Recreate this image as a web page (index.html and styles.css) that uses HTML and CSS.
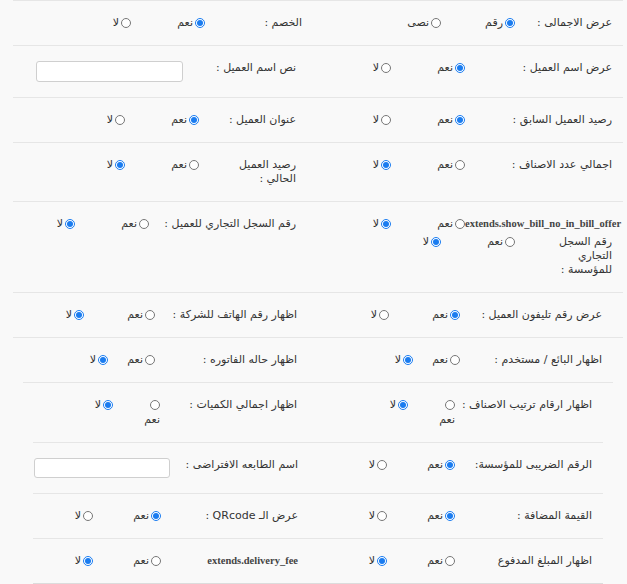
FILE: index.html
```html
<!DOCTYPE html>
<html lang="ar" dir="rtl">
<head>
    <meta charset="UTF-8">
    <meta name="viewport" content="width=device-width, initial-scale=1.0">
    <title>اعدادات الفاتورة</title>
    <link rel="stylesheet" href="styles.css">
</head>
<body>
    <div class="settings">
        <!-- row 1 -->
        <div class="row">
            <div class="half">
                <span class="lbl xs">عرض الاجمالى :</span>
                <label class="opt"><input type="radio" name="total_type" checked>رقم</label>
                <label class="opt"><input type="radio" name="total_type">نصى</label>
            </div>
            <div class="half">
                <span class="lbl xs">الخصم :</span>
                <label class="opt"><input type="radio" name="discount" checked>نعم</label>
                <label class="opt"><input type="radio" name="discount">لا</label>
            </div>
        </div>

        <!-- row 2 -->
        <div class="row">
            <div class="half">
                <span class="lbl xxl">عرض اسم العميل :</span>
                <label class="opt"><input type="radio" name="client_name" checked>نعم</label>
                <label class="opt"><input type="radio" name="client_name">لا</label>
            </div>
            <div class="half">
                <span class="lbl sm">نص اسم العميل :</span>
                <input type="text" class="field long">
            </div>
        </div>

        <!-- row 3 -->
        <div class="row">
            <div class="half">
                <span class="lbl xxl">رصيد العميل السابق :</span>
                <label class="opt"><input type="radio" name="prev_balance" checked>نعم</label>
                <label class="opt"><input type="radio" name="prev_balance">لا</label>
            </div>
            <div class="half">
                <span class="lbl xs">عنوان العميل :</span>
                <label class="opt"><input type="radio" name="client_address" checked>نعم</label>
                <label class="opt"><input type="radio" name="client_address">لا</label>
            </div>
        </div>

        <!-- row 4 -->
        <div class="row">
            <div class="half">
                <span class="lbl xxl">اجمالي عدد الاصناف :</span>
                <label class="opt"><input type="radio" name="items_count">نعم</label>
                <label class="opt"><input type="radio" name="items_count" checked>لا</label>
            </div>
            <div class="half">
                <span class="lbl xs"><span class="wrap">رصيد العميل الحالي :</span></span>
                <label class="opt"><input type="radio" name="cur_balance">نعم</label>
                <label class="opt"><input type="radio" name="cur_balance" checked>لا</label>
            </div>
        </div>

        <!-- row 5 -->
        <div class="row">
            <div class="half stack">
                <div class="line">
                    <span class="lbl xxl en">extends.show_bill_no_in_bill_offer</span>
                    <label class="opt"><input type="radio" name="bill_no_offer">نعم</label>
                    <label class="opt"><input type="radio" name="bill_no_offer" checked>لا</label>
                </div>
                <div class="line">
                    <span class="lbl xs"><span class="wrap tight">رقم السجل التجاري للمؤسسة :</span></span>
                    <label class="opt"><input type="radio" name="company_cr">نعم</label>
                    <label class="opt"><input type="radio" name="company_cr" checked>لا</label>
                </div>
            </div>
            <div class="half">
                <span class="lbl xxl">رقم السجل التجاري للعميل :</span>
                <label class="opt"><input type="radio" name="client_cr">نعم</label>
                <label class="opt"><input type="radio" name="client_cr" checked>لا</label>
            </div>
        </div>

        <!-- row 6 -->
        <div class="row wide-pad">
            <div class="half">
                <span class="lbl xl">عرض رقم تليفون العميل :</span>
                <label class="opt mid"><input type="radio" name="client_phone" checked>نعم</label>
                <label class="opt mid"><input type="radio" name="client_phone">لا</label>
            </div>
            <div class="half">
                <span class="lbl xl">اظهار رقم الهاتف للشركة :</span>
                <label class="opt mid"><input type="radio" name="company_phone">نعم</label>
                <label class="opt mid"><input type="radio" name="company_phone" checked>لا</label>
            </div>
        </div>

        <!-- row 7 -->
        <div class="row wide-pad">
            <div class="half">
                <span class="lbl xl">اظهار البائع / مستخدم :</span>
                <label class="opt short"><input type="radio" name="seller">نعم</label>
                <label class="opt short"><input type="radio" name="seller" checked>لا</label>
            </div>
            <div class="half">
                <span class="lbl xl">اظهار حاله الفاتوره :</span>
                <label class="opt short"><input type="radio" name="invoice_state">نعم</label>
                <label class="opt short"><input type="radio" name="invoice_state" checked>لا</label>
            </div>
        </div>

        <!-- row 8 -->
        <div class="row inset wide-pad">
            <div class="half">
                <span class="lbl lg">اظهار ارقام ترتيب الاصناف :</span>
                <label class="opt short col"><input type="radio" name="items_order">نعم</label>
                <label class="opt short"><input type="radio" name="items_order" checked>لا</label>
            </div>
            <div class="half">
                <span class="lbl lg">اظهار اجمالي الكميات :</span>
                <label class="opt short col"><input type="radio" name="qty_total">نعم</label>
                <label class="opt short"><input type="radio" name="qty_total" checked>لا</label>
            </div>
        </div>

        <!-- row 9 -->
        <div class="row inset-2">
            <div class="half">
                <span class="lbl lg">الرقم الضريبى للمؤسسة:</span>
                <label class="opt tight"><input type="radio" name="tax_no" checked>نعم</label>
                <label class="opt tight"><input type="radio" name="tax_no">لا</label>
            </div>
            <div class="half">
                <span class="lbl md">اسم الطابعه الافتراضى :</span>
                <input type="text" class="field">
            </div>
        </div>

        <!-- row 10 -->
        <div class="row inset-2">
            <div class="half">
                <span class="lbl lg">القيمة المضافة :</span>
                <label class="opt tight"><input type="radio" name="vat" checked>نعم</label>
                <label class="opt tight"><input type="radio" name="vat">لا</label>
            </div>
            <div class="half">
                <span class="lbl lg">عرض الـ QRcode :</span>
                <label class="opt tight"><input type="radio" name="qrcode" checked>نعم</label>
                <label class="opt tight"><input type="radio" name="qrcode">لا</label>
            </div>
        </div>

        <!-- row 11 -->
        <div class="row inset-2 last">
            <div class="half">
                <span class="lbl lg">اظهار المبلغ المدفوع</span>
                <label class="opt tight"><input type="radio" name="paid">نعم</label>
                <label class="opt tight"><input type="radio" name="paid" checked>لا</label>
            </div>
            <div class="half">
                <span class="lbl lg en">extends.delivery_fee</span>
                <label class="opt tight"><input type="radio" name="delivery_fee">نعم</label>
                <label class="opt tight"><input type="radio" name="delivery_fee" checked>لا</label>
            </div>
        </div>
    </div>
</body>
</html>
```

FILE: styles.css
```css
body {
    margin: 0;
    background: #f9f9f9;
    font-family: "DejaVu Sans", sans-serif;
    font-size: 11px;
    line-height: 14px;
    color: #333;
}
.settings {
    margin: 0 4px 0 13px;
}
.row {
    display: flex;
    border-top: 1px solid #e6e6e6;
    padding: 15px 0 15px;
}
.row.inset {
    margin: 0 10px;
}
.row.inset-2 {
    margin: 0 20px;
}
.row.last {
    border-bottom: 3px solid #dcdcdc;
}
.half {
    flex: 1 1 0;
    display: flex;
    align-items: flex-start;
    padding-right: 21px;
}
.half:first-child {
    padding-right: 11px;
}
.row.wide-pad .half:first-child {
    padding-right: 21px;
}
.half.stack {
    flex-direction: column;
    gap: 4px;
}
.line {
    display: flex;
    align-items: flex-start;
}
.lbl {
    flex: 0 0 auto;
    white-space: nowrap;
}
.lbl.xs { width: 97px; }
.lbl.sm { width: 113px; }
.lbl.md { width: 128px; }
.lbl.lg { width: 137px; }
.lbl.xl { width: 142px; }
.lbl.xxl { width: 147px; }
.lbl .wrap {
    display: inline-block;
    white-space: normal;
    max-width: 80px;
}
.lbl .wrap.tight {
    max-width: 56px;
}
.lbl.en {
    font-family: "Liberation Serif", serif;
    font-size: 10.5px;
    font-weight: bold;
    color: #444;
    direction: ltr;
    text-align: right;
}
.opt {
    flex: 0 0 74px;
    display: flex;
    align-items: center;
    white-space: nowrap;
}
.opt.mid { flex-basis: 71px; }
.opt.tight { flex-basis: 68px; }
.opt.short { flex-basis: 47px; }
.opt.col {
    flex-direction: column;
    align-items: flex-start;
    gap: 2px;
    padding-top: 2px;
}
.opt input {
    width: 10px;
    height: 10px;
    margin: 0 0 1px 2px;
    accent-color: #1a7cf0;
}
.field {
    width: 147px;
    height: 21px;
    box-sizing: border-box;
    border: 1px solid #cfcfcf;
    border-radius: 3px;
    background: #fff;
    margin: 0;
}
.row.inset-2 .field {
    width: 136px;
    height: 20px;
}
```
